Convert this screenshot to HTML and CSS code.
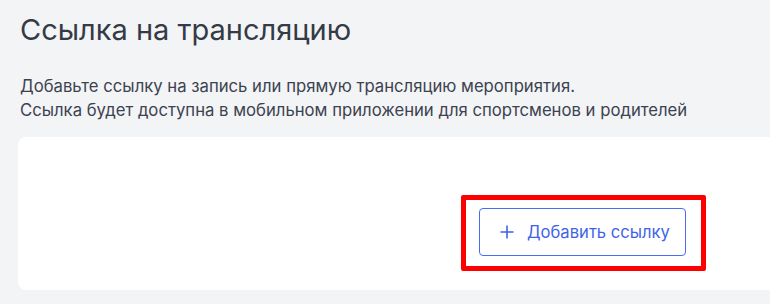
FILE: index.html
```html
<!DOCTYPE html>
<html lang="ru">
<head>
  <meta charset="UTF-8">
  <title>Ссылка на трансляцию</title>
  <link rel="stylesheet" href="styles.css">
</head>
<body>
  <div class="page">
    <h1 class="title">Ссылка на трансляцию</h1>

    <p class="hint">
      Добавьте ссылку на запись или прямую трансляцию мероприятия.<br>
      Ссылка будет доступна в мобильном приложении для спортсменов и родителей
    </p>

    <div class="card">
      <!-- red frame is the highlight around the button -->
      <div class="highlight">
        <button class="add-button">
          <svg class="plus" width="14" height="14" viewBox="0 0 14 14">
            <path d="M7 0.5V13.5M0.5 7H13.5" stroke="currentColor" stroke-width="1.6" fill="none"/>
          </svg>
          <span>Добавить ссылку</span>
        </button>
      </div>
    </div>
  </div>
</body>
</html>
```

FILE: styles.css
```css
body, html {
  margin: 0;
  padding: 0;
  height: 100%;
  background-color: #f3f4f6;
  font-family: Inter, "Noto Sans", sans-serif;
  overflow: hidden;
}

.page {
  padding: 12px 0 0 18px;
  width: 752px;
}

.title {
  margin: 0 0 0 2px;
  font-size: 29px;
  font-weight: 400;
  line-height: 36px;
  color: #343a46;
}

.hint {
  margin: 26px 0 0 2px;
  font-size: 16.7px;
  line-height: 24px;
  color: #3b4250;
}

.card {
  margin-right: -40px;
  margin-top: 15px;
  height: 153px;
  background: white;
  border-radius: 8px;
  padding: 58px 0 0 443px;
  box-sizing: border-box;
}

.highlight {
  display: inline-block;
  border: 5px solid #ff0000;
  border-radius: 2px;
  padding: 8px 15px 10px 13px;
}

.add-button {
  display: flex;
  align-items: center;
  gap: 13px;
  height: 48px;
  padding: 0 15px 0 20px;
  background: white;
  border: 1px solid #4a6cf0;
  border-radius: 4px;
  color: #3f63e8;
  font-family: Inter, "Noto Sans", sans-serif;
  font-size: 16.6px;
  cursor: pointer;
}

.plus {
  display: block;
}
```
